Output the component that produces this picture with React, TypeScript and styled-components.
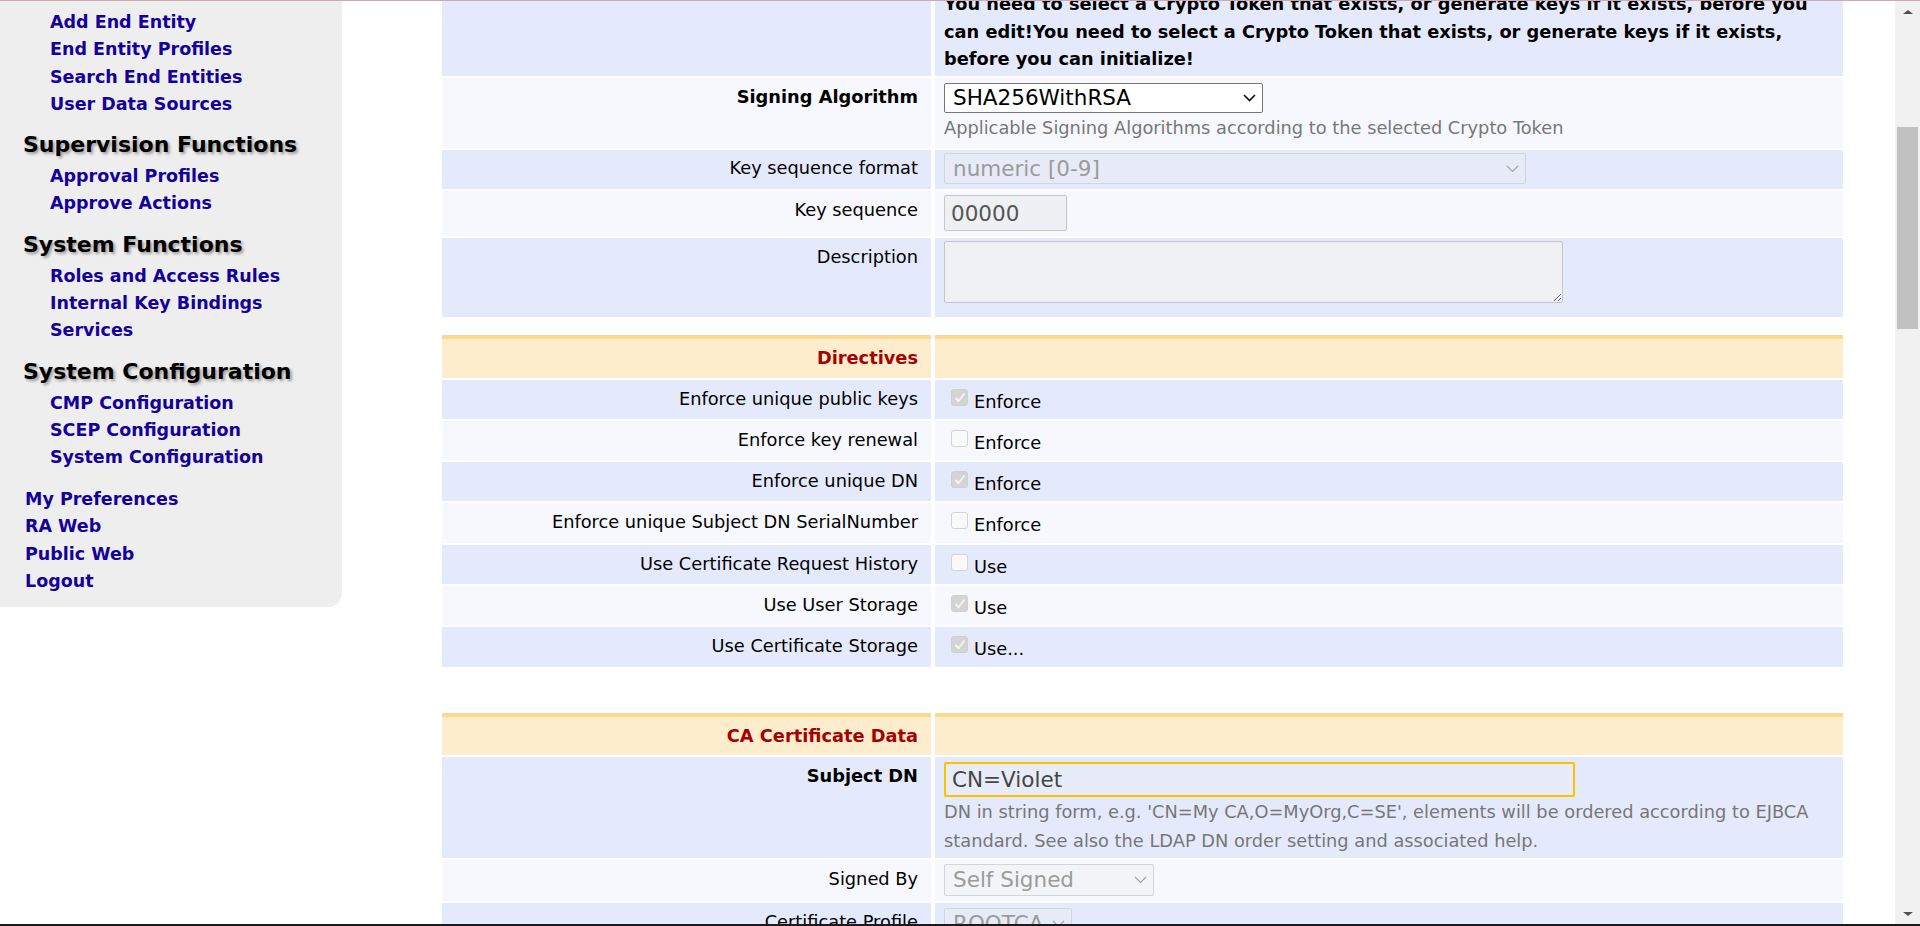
import React from 'react';
import styled, { createGlobalStyle, css } from 'styled-components';

const GlobalStyle = createGlobalStyle`
  html, body { margin: 0; padding: 0; height: 100%; overflow: hidden; background: #ffffff; }
  body { font-family: "DejaVu Sans", Verdana, sans-serif; color: #000; }
  * { box-sizing: border-box; }
`;

const FONT = '"DejaVu Sans", Verdana, sans-serif';

type Tone = 'blue' | 'light' | 'head';
const toneBg: Record<Tone, string> = { blue: '#e4eafc', light: '#f6f8fd', head: '#feedcc' };

const Frame = styled.div`
  height: 926px;
  display: flex;
  border-top: 1px solid #cfa8b1;
  border-bottom: 2px solid #1b1b1b;
  overflow: hidden;
  font-family: ${FONT};
`;

/* ---------- Sidebar ---------- */
const Sidebar = styled.nav`
  flex: 0 0 342px;
  align-self: flex-start;
  background: #eeeeee;
  border-bottom-right-radius: 14px;
  padding: 8px 0 11.6px;
`;

const MenuLink = styled.a<{ $level: 'sub' | 'top' }>`
  display: block;
  font-size: 17.5px;
  font-weight: bold;
  line-height: 27.3px;
  color: #14009c;
  text-decoration: none;
  white-space: nowrap;
  padding-left: ${(p) => (p.$level === 'sub' ? 50 : 25)}px;
`;

const MenuHeading = styled.h2`
  margin: 13px 0 4px;
  padding-left: 23px;
  font-size: 22px;
  line-height: 28px;
  font-weight: bold;
  color: #000;
  white-space: nowrap;
  text-shadow: 2px 2px 3px rgba(0, 0, 0, 0.35);
`;

const TopLinks = styled.div`
  margin-top: 14.6px;
`;

/* ---------- Main form ---------- */
const Main = styled.main`
  flex: 1;
  align-self: flex-start;
  margin-top: -21px;
  padding: 0 52px 0 100px;
  display: flex;
  flex-direction: column;
`;

const Section = styled.section<{ $gapTop?: number }>`
  display: grid;
  grid-template-columns: 489px 1fr;
  column-gap: 4px;
  row-gap: 2px;
  margin-top: ${(p) => p.$gapTop ?? 0}px;
`;

const headBorder = css`
  border-top: 4px solid #fdd88f;
`;

const LabelCell = styled.div<{ $tone: Tone; $bold?: boolean; $shift?: number }>`
  background: ${(p) => toneBg[p.$tone]};
  text-align: right;
  padding: ${(p) => 5 - (p.$shift ?? 0)}px 13px ${(p) => 7 + (p.$shift ?? 0)}px 10px;
  font-size: 17.8px;
  line-height: 27.3px;
  font-weight: ${(p) => (p.$bold || p.$tone === 'head' ? 'bold' : 'normal')};
  color: ${(p) => (p.$tone === 'head' ? '#a60000' : '#000')};
  ${(p) =>
    p.$tone === 'head' &&
    css`
      ${headBorder};
      padding-top: 5px;
      padding-bottom: 6px;
    `}
`;

const ValueCell = styled.div<{ $tone: Tone; $pad?: string }>`
  background: ${(p) => toneBg[p.$tone]};
  padding: ${(p) => p.$pad ?? '6px 9px'};
  font-size: 17.8px;
  line-height: 27.3px;
  ${(p) => p.$tone === 'head' && headBorder};
`;

const Message = styled.div`
  font-weight: bold;
  line-height: 27.5px;
  color: #000;
`;

const Helper = styled.div`
  color: #777777;
  line-height: 29px;
`;

const SelectBox = styled.div<{ $w: number; $h: number; $disabled?: boolean }>`
  width: ${(p) => p.$w}px;
  height: ${(p) => p.$h}px;
  display: flex;
  align-items: center;
  justify-content: space-between;
  padding: 0 6px 0 8px;
  border: 1px solid ${(p) => (p.$disabled ? '#d2d5dc' : '#767676')};
  border-radius: 2px;
  background: ${(p) => (p.$disabled ? 'rgba(239, 239, 239, 0.35)' : '#ffffff')};
  color: ${(p) => (p.$disabled ? '#9b9b9b' : '#000')};
  font-size: 21.5px;
  line-height: 1;
  white-space: nowrap;
  overflow: hidden;
`;

const TextInput = styled.input<{ $w: number; $h: number; $focus?: boolean }>`
  display: block;
  width: ${(p) => p.$w}px;
  height: ${(p) => p.$h}px;
  margin: 0;
  padding: 0 6px;
  font-family: ${FONT};
  font-size: 21.5px;
  color: ${(p) => (p.$focus ? '#454545' : '#555555')};
  border-radius: 2px;
  outline: none;
  ${(p) =>
    p.$focus
      ? css`
          border: 2px solid #fbc200;
          background: #e7ecf8;
        `
      : css`
          border: 1px solid #c6c7cb;
          background: #eff0f3;
        `}
`;

const TextArea = styled.textarea`
  display: block;
  width: 619px;
  height: 62px;
  margin: 0;
  padding: 4px 6px;
  font-family: ${FONT};
  font-size: 17px;
  border: 1px solid #c4c6cc;
  border-radius: 2px;
  background: #f0f1f5;
  outline: none;
`;

const CheckRow = styled.div`
  display: flex;
  align-items: flex-start;
  gap: 6px;
  padding-left: 7px;
`;

const CheckBox = styled.span<{ $checked: boolean }>`
  flex: 0 0 17px;
  height: 17px;
  margin-top: 4px;
  border-radius: 3px;
  border: 1px solid ${(p) => (p.$checked ? '#cfcfcf' : '#d4d4d4')};
  background: ${(p) => (p.$checked ? '#d4d4d4' : '#f9f9f9')};
  display: flex;
  align-items: center;
  justify-content: center;
`;

const CheckText = styled.span`
  padding-top: 3px;
  color: #000;
`;

/* ---------- Scrollbar ---------- */
const Scrollbar = styled.div`
  flex: 0 0 25px;
  background: #f1f1f1;
  display: flex;
  flex-direction: column;
  align-items: center;
  padding: 9px 0 8px;
`;

const Arrow = styled.span<{ $dir: 'up' | 'down' }>`
  width: 0;
  height: 0;
  border-left: 5.5px solid transparent;
  border-right: 5.5px solid transparent;
  ${(p) =>
    p.$dir === 'up'
      ? css`border-bottom: 4px solid #505050;`
      : css`border-top: 4px solid #505050;`}
`;

const Thumb = styled.div`
  width: 21px;
  height: 202px;
  margin-top: 113px;
  background: #c1c1c1;
`;

const Spacer = styled.div`
  flex: 1;
`;

/* ---------- Pieces ---------- */
const Chevron: React.FC<{ disabled?: boolean }> = ({ disabled }) => (
  <svg width="13" height="8" viewBox="0 0 13 8" style={{ flex: '0 0 auto' }}>
    <path
      d="M1 1 L6.5 6.5 L12 1"
      fill="none"
      stroke={disabled ? '#a3a3a3' : '#111'}
      strokeWidth={disabled ? 1.1 : 1.7}
    />
  </svg>
);

const Select: React.FC<{ w: number; h: number; value: string; disabled?: boolean }> = ({
  w,
  h,
  value,
  disabled,
}) => (
  <SelectBox $w={w} $h={h} $disabled={disabled} role="combobox" aria-disabled={disabled}>
    <span>{value}</span>
    <Chevron disabled={disabled} />
  </SelectBox>
);

const Check: React.FC<{ checked: boolean; text: string }> = ({ checked, text }) => (
  <CheckRow>
    <CheckBox $checked={checked} role="checkbox" aria-checked={checked}>
      {checked && (
        <svg width="12" height="11" viewBox="0 0 12 11">
          <path d="M1.5 6 L4.5 9 L10.5 1.5" fill="none" stroke="#f4f4f4" strokeWidth="2" />
        </svg>
      )}
    </CheckBox>
    <CheckText>{text}</CheckText>
  </CheckRow>
);

const subGroups: { heading?: string; links: string[] }[] = [
  { links: ['Add End Entity', 'End Entity Profiles', 'Search End Entities', 'User Data Sources'] },
  { heading: 'Supervision Functions', links: ['Approval Profiles', 'Approve Actions'] },
  { heading: 'System Functions', links: ['Roles and Access Rules', 'Internal Key Bindings', 'Services'] },
  { heading: 'System Configuration', links: ['CMP Configuration', 'SCEP Configuration', 'System Configuration'] },
];

const topLinks = ['My Preferences', 'RA Web', 'Public Web', 'Logout'];

const directives: { label: string; checked: boolean; text: string }[] = [
  { label: 'Enforce unique public keys', checked: true, text: 'Enforce' },
  { label: 'Enforce key renewal', checked: false, text: 'Enforce' },
  { label: 'Enforce unique DN', checked: true, text: 'Enforce' },
  { label: 'Enforce unique Subject DN SerialNumber', checked: false, text: 'Enforce' },
  { label: 'Use Certificate Request History', checked: false, text: 'Use' },
  { label: 'Use User Storage', checked: true, text: 'Use' },
  { label: 'Use Certificate Storage', checked: true, text: 'Use...' },
];

export default function App() {
  return (
    <>
      <GlobalStyle />
      <Frame>
        <Sidebar>
          {subGroups.map((g, i) => (
            <React.Fragment key={i}>
              {g.heading && <MenuHeading>{g.heading}</MenuHeading>}
              {g.links.map((l) => (
                <MenuLink key={l} $level="sub" href="#">
                  {l}
                </MenuLink>
              ))}
            </React.Fragment>
          ))}
          <TopLinks>
            {topLinks.map((l) => (
              <MenuLink key={l} $level="top" href="#">
                {l}
              </MenuLink>
            ))}
          </TopLinks>
        </Sidebar>

        <Main>
          <Section>
            <LabelCell $tone="blue" />
            <ValueCell $tone="blue" $pad="10px 9px 3.5px">
              <Message>
                You need to select a Crypto Token that exists, or generate keys if it exists, before you can
                edit!You need to select a Crypto Token that exists, or generate keys if it exists, before you can
                initialize!
              </Message>
            </ValueCell>

            <LabelCell $tone="light" $bold>
              Signing Algorithm
            </LabelCell>
            <ValueCell $tone="light" $pad="5px 9px 6px">
              <Select w={319} h={30} value="SHA256WithRSA" />
              <Helper>Applicable Signing Algorithms according to the selected Crypto Token</Helper>
            </ValueCell>

            <LabelCell $tone="blue" $shift={1.5}>
              Key sequence format
            </LabelCell>
            <ValueCell $tone="blue" $pad="3px 9px 5px">
              <Select w={582} h={31} value="numeric [0-9]" disabled />
            </ValueCell>

            <LabelCell $tone="light">Key sequence</LabelCell>
            <ValueCell $tone="light" $pad="4px 9px 5px">
              <TextInput $w={123} $h={36} readOnly defaultValue="00000" />
            </ValueCell>

            <LabelCell $tone="blue">Description</LabelCell>
            <ValueCell $tone="blue" $pad="3px 9px 14px">
              <TextArea readOnly defaultValue="" />
            </ValueCell>
          </Section>

          <Section $gapTop={18}>
            <LabelCell $tone="head">Directives</LabelCell>
            <ValueCell $tone="head" />
            {directives.map((d, i) => {
              const tone: Tone = i % 2 === 0 ? 'blue' : 'light';
              return (
                <React.Fragment key={d.label}>
                  <LabelCell $tone={tone}>{d.label}</LabelCell>
                  <ValueCell $tone={tone} $pad="5px 9px 0">
                    <Check checked={d.checked} text={d.text} />
                  </ValueCell>
                </React.Fragment>
              );
            })}
          </Section>

          <Section $gapTop={46}>
            <LabelCell $tone="head">CA Certificate Data</LabelCell>
            <ValueCell $tone="head" />

            <LabelCell $tone="blue" $bold>
              Subject DN
            </LabelCell>
            <ValueCell $tone="blue" $pad="5px 9px 3px">
              <TextInput $w={631} $h={35} $focus readOnly defaultValue="CN=Violet" />
              <Helper>
                DN in string form, e.g. 'CN=My CA,O=MyOrg,C=SE', elements will be ordered according to EJBCA
                standard. See also the LDAP DN order setting and associated help.
              </Helper>
            </ValueCell>

            <LabelCell $tone="light">Signed By</LabelCell>
            <ValueCell $tone="light" $pad="4px 9px 5px">
              <Select w={210} h={32} value="Self Signed" disabled />
            </ValueCell>

            <LabelCell $tone="blue">Certificate Profile</LabelCell>
            <ValueCell $tone="blue" $pad="5px 9px 5px">
              <Select w={128} h={32} value="ROOTCA" disabled />
            </ValueCell>
          </Section>
        </Main>

        <Scrollbar aria-hidden>
          <Arrow $dir="up" />
          <Thumb />
          <Spacer />
          <Arrow $dir="down" />
        </Scrollbar>
      </Frame>
    </>
  );
}
